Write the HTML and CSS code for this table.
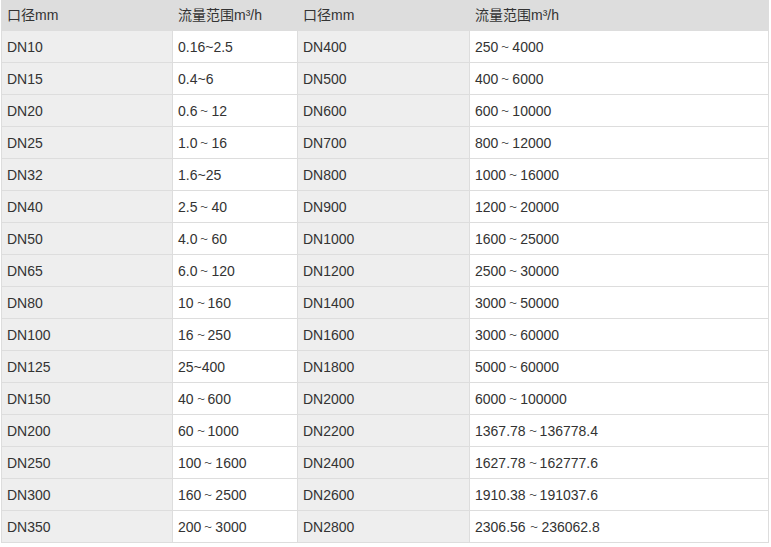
FILE: index.html
```html
<!DOCTYPE html>
<html>
<head>
<meta charset="utf-8">
<link rel="stylesheet" href="styles.css">
</head>
<body>
<table class="spec">
<colgroup><col class="c1"><col class="c2"><col class="c3"><col class="c4"></colgroup>
<thead>
<tr><th class="k">口径mm</th><th>流量范围m³/h</th><th class="k">口径mm</th><th>流量范围m³/h</th></tr>
</thead>
<tbody>
<tr><td class="k">DN10</td><td>0.16~2.5</td><td class="k">DN400</td><td>250<span class="t">～</span>4000</td></tr>
<tr><td class="k">DN15</td><td>0.4~6</td><td class="k">DN500</td><td>400<span class="t">～</span>6000</td></tr>
<tr><td class="k">DN20</td><td>0.6<span class="t">～</span>12</td><td class="k">DN600</td><td>600<span class="t">～</span>10000</td></tr>
<tr><td class="k">DN25</td><td>1.0<span class="t">～</span>16</td><td class="k">DN700</td><td>800<span class="t">～</span>12000</td></tr>
<tr><td class="k">DN32</td><td>1.6~25</td><td class="k">DN800</td><td>1000<span class="t">～</span>16000</td></tr>
<tr><td class="k">DN40</td><td>2.5<span class="t">～</span>40</td><td class="k">DN900</td><td>1200<span class="t">～</span>20000</td></tr>
<tr><td class="k">DN50</td><td>4.0<span class="t">～</span>60</td><td class="k">DN1000</td><td>1600<span class="t">～</span>25000</td></tr>
<tr><td class="k">DN65</td><td>6.0<span class="t">～</span>120</td><td class="k">DN1200</td><td>2500<span class="t">～</span>30000</td></tr>
<tr><td class="k">DN80</td><td>10<span class="t">～</span>160</td><td class="k">DN1400</td><td>3000<span class="t">～</span>50000</td></tr>
<tr><td class="k">DN100</td><td>16<span class="t">～</span>250</td><td class="k">DN1600</td><td>3000<span class="t">～</span>60000</td></tr>
<tr><td class="k">DN125</td><td>25~400</td><td class="k">DN1800</td><td>5000<span class="t">～</span>60000</td></tr>
<tr><td class="k">DN150</td><td>40<span class="t">～</span>600</td><td class="k">DN2000</td><td>6000<span class="t">～</span>100000</td></tr>
<tr><td class="k">DN200</td><td>60<span class="t">～</span>1000</td><td class="k">DN2200</td><td>1367.78<span class="t">～</span>136778.4</td></tr>
<tr><td class="k">DN250</td><td>100<span class="t">～</span>1600</td><td class="k">DN2400</td><td>1627.78<span class="t">～</span>162777.6</td></tr>
<tr><td class="k">DN300</td><td>160<span class="t">～</span>2500</td><td class="k">DN2600</td><td>1910.38<span class="t">～</span>191037.6</td></tr>
<tr><td class="k">DN350</td><td>200<span class="t">～</span>3000</td><td class="k">DN2800</td><td class="tight">2306.56 <span class="t">～</span> 236062.8</td></tr>
</tbody>
</table>
</body>
</html>
```
FILE: styles.css
```css
html, body { margin: 0; padding: 0; background: #fff; }
body { font-family: "Liberation Sans", Arial, "Noto Sans CJK SC", sans-serif; font-size: 14px; color: #333; }
.spec { border-collapse: collapse; width: 767px; margin: -2px 0 0 1px; table-layout: fixed; }
.c1 { width: 171px; }
.c2 { width: 125px; }
.c3 { width: 172px; }
.c4 { width: 299px; }
.spec th, .spec td { border: 1px solid #ddd; height: 31px; padding: 0 5px; line-height: 16px; text-align: left; font-weight: normal; white-space: nowrap; }
.spec thead th { background: #ddd; }
.spec td.k { background: #eee; }
.spec td { background: #fff; }
.spec td.tight { word-spacing: -3px; }
.t { display: inline-block; line-height: 10px; transform: scale(0.55, 0.6); }
```
